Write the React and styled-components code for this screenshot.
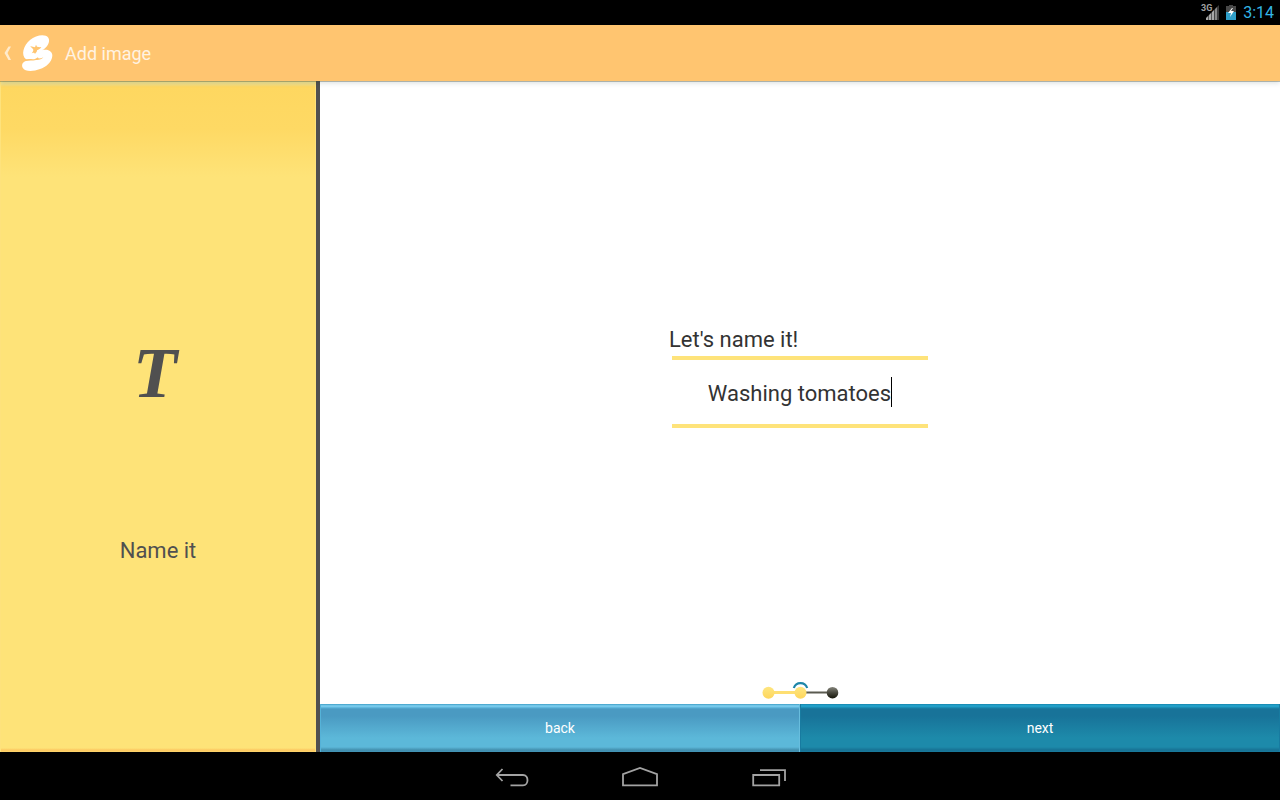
import React, { useState } from "react";
import styled, { createGlobalStyle } from "styled-components";

const GlobalStyle = createGlobalStyle`
  * { box-sizing: border-box; }
  body { margin: 0; background: #000; font-family: Roboto, "Liberation Sans", sans-serif; }
  button, input { font-family: inherit; }
`;

const Screen = styled.div`
  display: flex;
  flex-direction: column;
  min-height: 100vh;
`;

const StatusBar = styled.div`
  display: flex;
  align-items: center;
  justify-content: flex-end;
  height: 25px;
  padding-right: 6px;
  background: #000;
`;

const Clock = styled.time`
  margin-left: 6px;
  color: #33b5e5;
  font-size: 16px;
  line-height: 24px;
`;

const ActionBar = styled.header`
  position: relative;
  z-index: 1;
  display: flex;
  align-items: center;
  height: 56px;
  background: #ffc570;
  box-shadow: 0 1px 0 rgba(70, 80, 60, 0.36), 0 2px 5px rgba(0, 40, 40, 0.15);
`;

const UpButton = styled.button`
  display: flex;
  align-items: center;
  height: 56px;
  padding: 0;
  border: 0;
  background: none;
`;

const Title = styled.h1`
  margin: 0 0 0 7px;
  color: #fff3e2;
  font-size: 18px;
  font-weight: 400;
  line-height: 24px;
  padding-top: 2px;
`;

const Body = styled.div`
  display: flex;
  flex: 1;
`;

const Sidebar = styled.aside`
  display: flex;
  flex-direction: column;
  align-items: center;
  justify-content: center;
  width: 25%;
  padding-top: 64px;
  border-right: 4px solid #505050;
  color: #505050;
  background: linear-gradient(#f4e694 0, #f4e08a 3px, #fed760 6px, #fed964 48px, #fee378 96px, #fee378 calc(100% - 4px), #fdc862 calc(100% - 2px), #fdd66c 100%);
  box-shadow: inset 1px 0 #fee27c, inset -1px 0 #fee27c;
`;

const StepGlyph = styled.div`
  padding-right: 6px;
  font-family: "Liberation Serif", serif;
  font-size: 72px;
  font-style: italic;
  font-weight: 700;
  line-height: 80px;
`;

const StepName = styled.h2`
  margin: 124px 0 0;
  font-size: 22px;
  font-weight: 400;
  line-height: 28px;
`;

const Main = styled.main`
  display: flex;
  flex: 1;
  flex-direction: column;
  background: #fff;
`;

const Form = styled.form`
  display: flex;
  flex: 1;
  flex-direction: column;
  align-items: center;
  justify-content: center;
  padding-bottom: 10px;
`;

const Field = styled.div`
  display: flex;
  flex-direction: column;
  width: 262px;
`;

const Label = styled.label`
  color: #333;
  font-size: 22px;
  line-height: 32px;
`;

const EntryRow = styled.div`
  display: flex;
  align-items: center;
  justify-content: center;
  height: 72px;
  margin: 0 3px;
  border: solid #fee37a;
  border-width: 4px 0;
`;

const Entry = styled.input`
  field-sizing: content;
  max-width: 240px;
  height: 34px;
  padding: 4px 0 0;
  border: 0;
  outline: 0;
  background: none;
  caret-color: transparent;
  color: #333;
  font-size: 22px;
`;

const Caret = styled.span`
  width: 1px;
  height: 30px;
  background: #000;
`;

const Steps = styled.div`
  display: flex;
  justify-content: center;
  height: 24px;
`;

const Actions = styled.div`
  display: flex;
`;

const ActionButton = styled.button`
  flex: 1;
  height: 48px;
  border: 0;
  color: #fff;
  font-size: 14px;
  background: ${(p) =>
    p.$dark
      ? "linear-gradient(#1585ad 0, #25a6d0 2px, #1784aa 4px, #187399 5px, #187399 12px, #1d8aaa 34px, #1d8aaa 43px, #177294 46px, #187a9d 48px)"
      : "linear-gradient(#3d9dc5 0, #82d2f3 2px, #55aed5 4px, #4a9ac2 5px, #4a9ac2 12px, #5cb8d9 34px, #5cb8d9 43px, #438fae 46px, #4295b7 48px)"};
  box-shadow: inset 1px 0 ${(p) => (p.$dark ? "#187ba0" : "#55b2d8")}, inset -1px 0 ${(p) => (p.$dark ? "#187ba0" : "#68bddd")};
`;

const NavBar = styled.nav`
  display: flex;
  justify-content: center;
  height: 48px;
  background: #000;
`;

const NavButton = styled.button`
  display: flex;
  align-items: center;
  justify-content: center;
  width: 128px;
  height: 48px;
  padding: 0;
  border: 0;
  background: none;
`;

function StatusIcons() {
  return (
    <svg width="38" height="24" viewBox="0 0 38 24" aria-hidden="true">
      <text x="2" y="10" fill="#a0a0a0" fontSize="9" fontWeight="700" fontFamily="Roboto, sans-serif">3G</text>
      <path d="M7 19V17L9 15V19ZM10 19V14L12 12V19ZM13 19V11L15 9V19Z" fill="#a8a8a8" />
      <path d="M9 19V15L10 14V19ZM12 19V12L13 11V19Z" fill="#555" />
      <path d="M15 19V9L16 8V19Z" fill="#444" />
      <path d="M16 19V8L18 6V19Z" fill="#888" />
      <path d="M18 19V6L20 4V19Z" fill="#3c3c3c" />
      <path d="M30 4h4v1h3v14H27V5h3Z" fill="#484848" />
      <path d="M27 11h10v8H27Z" fill="#309fc9" />
      <path d="M33 7 29 12h3l-1 4 4-6h-3l2-3Z" fill="#fff" />
    </svg>
  );
}

function UpIcon() {
  return (
    <svg width="16" height="42" viewBox="0 0 16 42" aria-hidden="true">
      <path d="M8.500 14.500H11L7.500 21 11 28H8.500L4.500 21Z" fill="#fff" opacity="0.65" />
    </svg>
  );
}

function Logo() {
  return (
    <svg width="42" height="42" viewBox="0 0 126 126" aria-hidden="true">
      <path
        d="M30 82C14 70 22 40 42 24C60 9 88 5 97 17C104 29 94 46 78 55C96 50 109 58 109 71C108 90 90 105 72 111C52 119 27 120 20 107C15 96 22 87 34 86L48 83L44 81C38 83 34 84 30 82Z"
        fill="#fff"
      />
      <path d="M44 79L66 76L68 84L46 88Z" fill="#fff" />
      <path
        d="M43 42C49 44 53 44 57 46L60 38L63 44C68 45 72 46 76 45C73 51 68 52 63 55C64 60 59 62 57 66C56 62 52 61 47 64C50 60 52 57 52 53C49 48 45 46 43 42Z"
        fill="#ffc570"
      />
      <path d="M25 84C36 79 48 83 57 81L66 76L67 79C73 80 78 79 82 76C77 82 69 85 60 84C50 87 38 84 26 87Z" fill="#ffc570" />
    </svg>
  );
}

function StepTrack() {
  return (
    <svg width="80" height="24" viewBox="0 0 80 24" role="img" aria-label="Step 2 of 3">
      <defs>
        <linearGradient id="done" x1="0" y1="0" x2="0" y2="1">
          <stop offset="0" stopColor="#fee680" />
          <stop offset="1" stopColor="#fed65c" />
        </linearGradient>
        <linearGradient id="todo" x1="0" y1="0" x2="0" y2="1">
          <stop offset="0" stopColor="#85857c" />
          <stop offset="0.5" stopColor="#48483e" />
          <stop offset="1" stopColor="#15150a" />
        </linearGradient>
      </defs>
      <path d="M8.500 12.500H40.500" stroke="#fedf72" strokeWidth="3" />
      <path d="M40.500 12.500H72.500" stroke="#5a5a50" strokeWidth="2" />
      <path d="M33.800 8C36 1.500 45 1.500 47.200 8" fill="none" stroke="#1e86a8" strokeWidth="2.200" />
      <circle cx="8.500" cy="12.700" r="6" fill="url(#done)" />
      <circle cx="40.500" cy="12.700" r="6" fill="url(#done)" />
      <circle cx="72.500" cy="12.700" r="5.800" fill="url(#todo)" />
    </svg>
  );
}

function NavIcon({ d }) {
  return (
    <svg width="40" height="24" viewBox="0 0 40 24" fill="none" stroke="#a3a3a3" strokeWidth="1.800" aria-hidden="true">
      <path d={d} />
    </svg>
  );
}

const NAV_ITEMS = [
  { label: "Back", d: "M10.500 5 4.800 11 10.500 17M5 11H31C37 11 37 21.300 31 21.300H18.500" },
  { label: "Home", d: "M3 21.300V10.200L20 4 37 10.200V21.300Z" },
  { label: "Recent apps", d: "M5.200 11H31.200V21.300H5.200ZM12 6.200H37V17" },
];

export default function App() {
  const [name, setName] = useState("Washing tomatoes");
  return (
    <Screen>
      <GlobalStyle />
      <StatusBar>
        <StatusIcons />
        <Clock>3:14</Clock>
      </StatusBar>
      <ActionBar>
        <UpButton type="button" aria-label="Navigate up">
          <UpIcon />
          <Logo />
        </UpButton>
        <Title>Add image</Title>
      </ActionBar>
      <Body>
        <Sidebar>
          <StepGlyph aria-hidden="true">T</StepGlyph>
          <StepName>Name it</StepName>
        </Sidebar>
        <Main>
          <Form onSubmit={(e) => e.preventDefault()}>
            <Field>
              <Label htmlFor="image-name">Let's name it!</Label>
              <EntryRow>
                <Entry id="image-name" type="text" value={name} onChange={(e) => setName(e.target.value)} />
                <Caret />
              </EntryRow>
            </Field>
          </Form>
          <Steps>
            <StepTrack />
          </Steps>
          <Actions>
            <ActionButton type="button">back</ActionButton>
            <ActionButton type="button" $dark>next</ActionButton>
          </Actions>
        </Main>
      </Body>
      <NavBar>
        {NAV_ITEMS.map((item) => (
          <NavButton key={item.label} type="button" aria-label={item.label}>
            <NavIcon d={item.d} />
          </NavButton>
        ))}
      </NavBar>
    </Screen>
  );
}
